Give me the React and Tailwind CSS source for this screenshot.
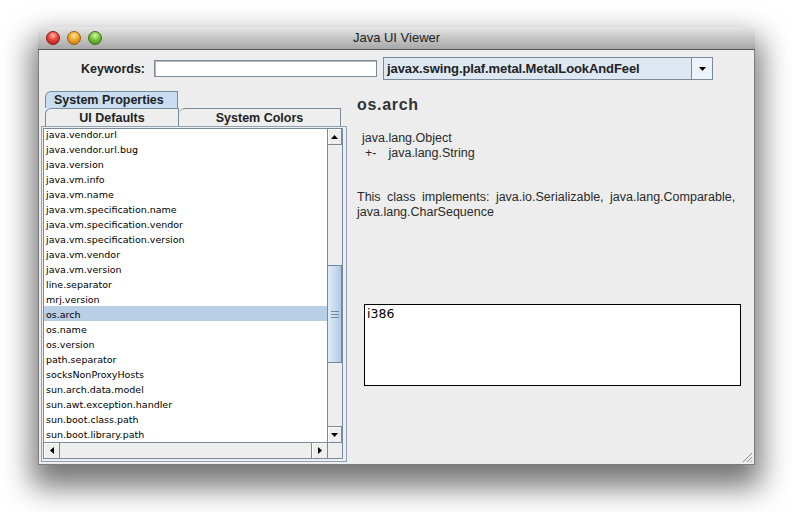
import React from 'react';

const KEYS = [
  'java.vendor.url',
  'java.vendor.url.bug',
  'java.version',
  'java.vm.info',
  'java.vm.name',
  'java.vm.specification.name',
  'java.vm.specification.vendor',
  'java.vm.specification.version',
  'java.vm.vendor',
  'java.vm.version',
  'line.separator',
  'mrj.version',
  'os.arch',
  'os.name',
  'os.version',
  'path.separator',
  'socksNonProxyHosts',
  'sun.arch.data.model',
  'sun.awt.exception.handler',
  'sun.boot.class.path',
  'sun.boot.library.path',
];

const Tri = ({ dir }) => {
  const pts = {
    up: '0,4 7,4 3.5,0',
    down: '0,0 7,0 3.5,4',
    left: '4,0 4,7 0,3.5',
    right: '0,0 0,7 4,3.5',
  }[dir];
  const vertical = dir === 'up' || dir === 'down';
  return (
    <svg width={vertical ? 7 : 4} height={vertical ? 4 : 7} viewBox={vertical ? '0 0 7 4' : '0 0 4 7'}>
      <polygon points={pts} fill="#000" />
    </svg>
  );
};

function ArrowBtn({ dir, className = '' }) {
  return (
    <div className={`flex items-center justify-center border border-[#7a8a99] bg-[#eeeeee] shadow-[inset_1px_1px_0_#fff] ${className}`}>
      <Tri dir={dir} />
    </div>
  );
}

function Light({ color }) {
  const bg = {
    red: 'bg-[radial-gradient(circle_at_50%_30%,#ffb3a8_0%,#e8443a_45%,#a41812_100%)] border-[#8c1a14]',
    amber: 'bg-[radial-gradient(circle_at_50%_30%,#ffe7a0_0%,#f2a628_45%,#b86a0a_100%)] border-[#9a5d10]',
    green: 'bg-[radial-gradient(circle_at_50%_30%,#d6f7a6_0%,#76c23a_45%,#3c7d14_100%)] border-[#3f6e1c]',
  }[color];
  return <div className={`h-[14px] w-[14px] rounded-full border ${bg}`} />;
}

export default function App() {
  return (
    <div className="min-h-[512px] w-[792px] bg-white pl-[38px] pt-[27px] font-['Liberation_Sans',sans-serif] text-[#1a1a1a]">
      <div className="relative flex h-[438px] w-[717px] flex-col rounded-t-[5px] shadow-[0_16px_30px_6px_rgba(0,0,0,0.55)]">
        {/* title bar */}
        <div className="relative flex h-[23px] items-center rounded-t-[5px] border-b border-[#555] bg-gradient-to-b from-[#e6e6e6] to-[#a7a7a7] pl-[8px]">
          <div className="flex gap-[7px]">
            <Light color="red" />
            <Light color="amber" />
            <Light color="green" />
          </div>
          <div className="absolute inset-x-0 top-[3px] text-center text-[13px] leading-[16px] text-[#222]">Java UI Viewer</div>
        </div>

        {/* body */}
        <div className="flex flex-1 flex-col border-x border-b border-[#7d7d7d] bg-[#ededed]">
          <div className="mt-[7px] flex h-[23px] items-center">
            <div className="w-[106px] pt-[1px] text-right text-[12.5px] font-bold text-[#222]">Keywords:</div>
            <div className="ml-[9px] h-[17px] w-[223px] border border-[#7a8a99] bg-white shadow-[inset_1px_1px_0_#bbb]" />
            <div className="ml-[6px] flex h-[23px] w-[330px] border border-[#7a8a99] bg-[#dde8f3]">
              <div className="flex flex-1 items-center pl-[3px] text-[13px] font-bold tracking-[-0.1px] text-[#222]">
                javax.swing.plaf.metal.MetalLookAndFeel
              </div>
              <div className="flex w-[21px] items-center justify-center border-l border-[#7a8a99] bg-[#eef3f9]">
                <Tri dir="down" />
              </div>
            </div>
          </div>

          <div className="mt-[11px] flex">
            {/* left column */}
            <div className="ml-[2px] w-[306px]">
              <div className="flex h-[17px] pl-[4px]">
                <div className="flex w-[133px] items-center rounded-tl-[6px] border border-b-0 border-[#7a8a99] bg-[#c8ddf2] pl-[8px] pt-[1px] text-[12.5px] font-bold text-[#222]">
                  System Properties
                </div>
              </div>
              <div className="flex h-[18px] pl-[4px]">
                <div className="flex w-[134px] items-center justify-center rounded-tl-[6px] border border-b-0 border-[#7a8a99] bg-[#eeeeee] pt-[1px] text-[12.5px] font-bold text-[#222]">
                  UI Defaults
                </div>
                <div className="flex w-[162px] items-center justify-center rounded-tl-[6px] border border-b-0 border-l-0 border-[#7a8a99] bg-[#eeeeee] pt-[1px] text-[12.5px] font-bold text-[#222]">
                  System Colors
                </div>
              </div>
              <div className="h-[336px] border border-[#8ea3b8] bg-[#eeeeee] pl-[1px] pt-[1px]">
                <div className="grid h-[331px] w-[300px] grid-cols-[1fr_15px] grid-rows-[1fr_16px] border border-[#7a8a99]">
                  <div className="overflow-hidden bg-white font-['DejaVu_Sans',sans-serif] text-[9.5px] text-black">
                    <div className="-mt-[3px]">
                      {KEYS.map((k) => (
                        <div key={k} className={`h-[15px] pl-[2px] pt-[1px] leading-[15px] ${k === 'os.arch' ? 'bg-[#b8cfe5]' : ''}`}>
                          {k}
                        </div>
                      ))}
                    </div>
                  </div>
                  <div className="flex flex-col border-l border-[#7a8a99] bg-[#eeeeee]">
                    <ArrowBtn dir="up" className="h-[16px] border-l-0 border-t-0" />
                    <div className="relative flex-1">
                      <div className="absolute inset-x-0 top-[120px] flex h-[98px] items-center justify-center border border-l-0 border-[#6f87a1] bg-gradient-to-r from-[#dfeaf6] via-[#c8ddf2] to-[#b0c8e2]">
                        <div className="flex w-[8px] flex-col gap-[2px]">
                          <div className="h-px bg-[#6f87a1]" />
                          <div className="h-px bg-[#6f87a1]" />
                          <div className="h-px bg-[#6f87a1]" />
                        </div>
                      </div>
                    </div>
                    <ArrowBtn dir="down" className="h-[16px] border-b-0 border-l-0" />
                  </div>
                  <div className="flex border-t border-[#7a8a99] bg-[#eeeeee]">
                    <ArrowBtn dir="left" className="w-[16px] border-b-0 border-l-0 border-t-0" />
                    <div className="flex-1" />
                    <ArrowBtn dir="right" className="w-[16px] border-b-0 border-r-0 border-t-0" />
                  </div>
                  <div className="border-l border-t border-[#7a8a99] bg-[#eeeeee]" />
                </div>
              </div>
            </div>

            {/* right column */}
            <div className="ml-[10px] flex-1 text-[#2a2a2a]">
              <div className="mt-[4px] h-[20px] text-[16px] font-bold leading-[20px] tracking-[0.7px] text-[#333]">os.arch</div>
              <div className="mt-[16px] text-[12.5px] leading-[15px]">
                <div className="pl-[5px]">java.lang.Object</div>
                <div className="flex pl-[8px]">
                  <span>+-</span>
                  <span className="ml-[12px]">java.lang.String</span>
                </div>
              </div>
              <div className="mt-[29px] text-[12.5px] leading-[15px] [word-spacing:3px]">
                This class implements: java.io.Serializable, java.lang.Comparable,
                <br />
                java.lang.CharSequence
              </div>
              <div className="ml-[7px] mt-[84px] h-[82px] w-[377px] border border-black bg-white pl-[2px] pt-[1px] font-['DejaVu_Sans',sans-serif] text-[12.5px] leading-[15px] text-black">
                i386
              </div>
            </div>
          </div>
        </div>

        <svg className="absolute bottom-[2px] right-[2px]" width="12" height="12" viewBox="0 0 12 12">
          <path d="M11 2 L2 11 M11 6 L6 11 M11 9.5 L9.5 11" stroke="#8a8a8a" strokeWidth="1" />
        </svg>
      </div>
    </div>
  );
}
